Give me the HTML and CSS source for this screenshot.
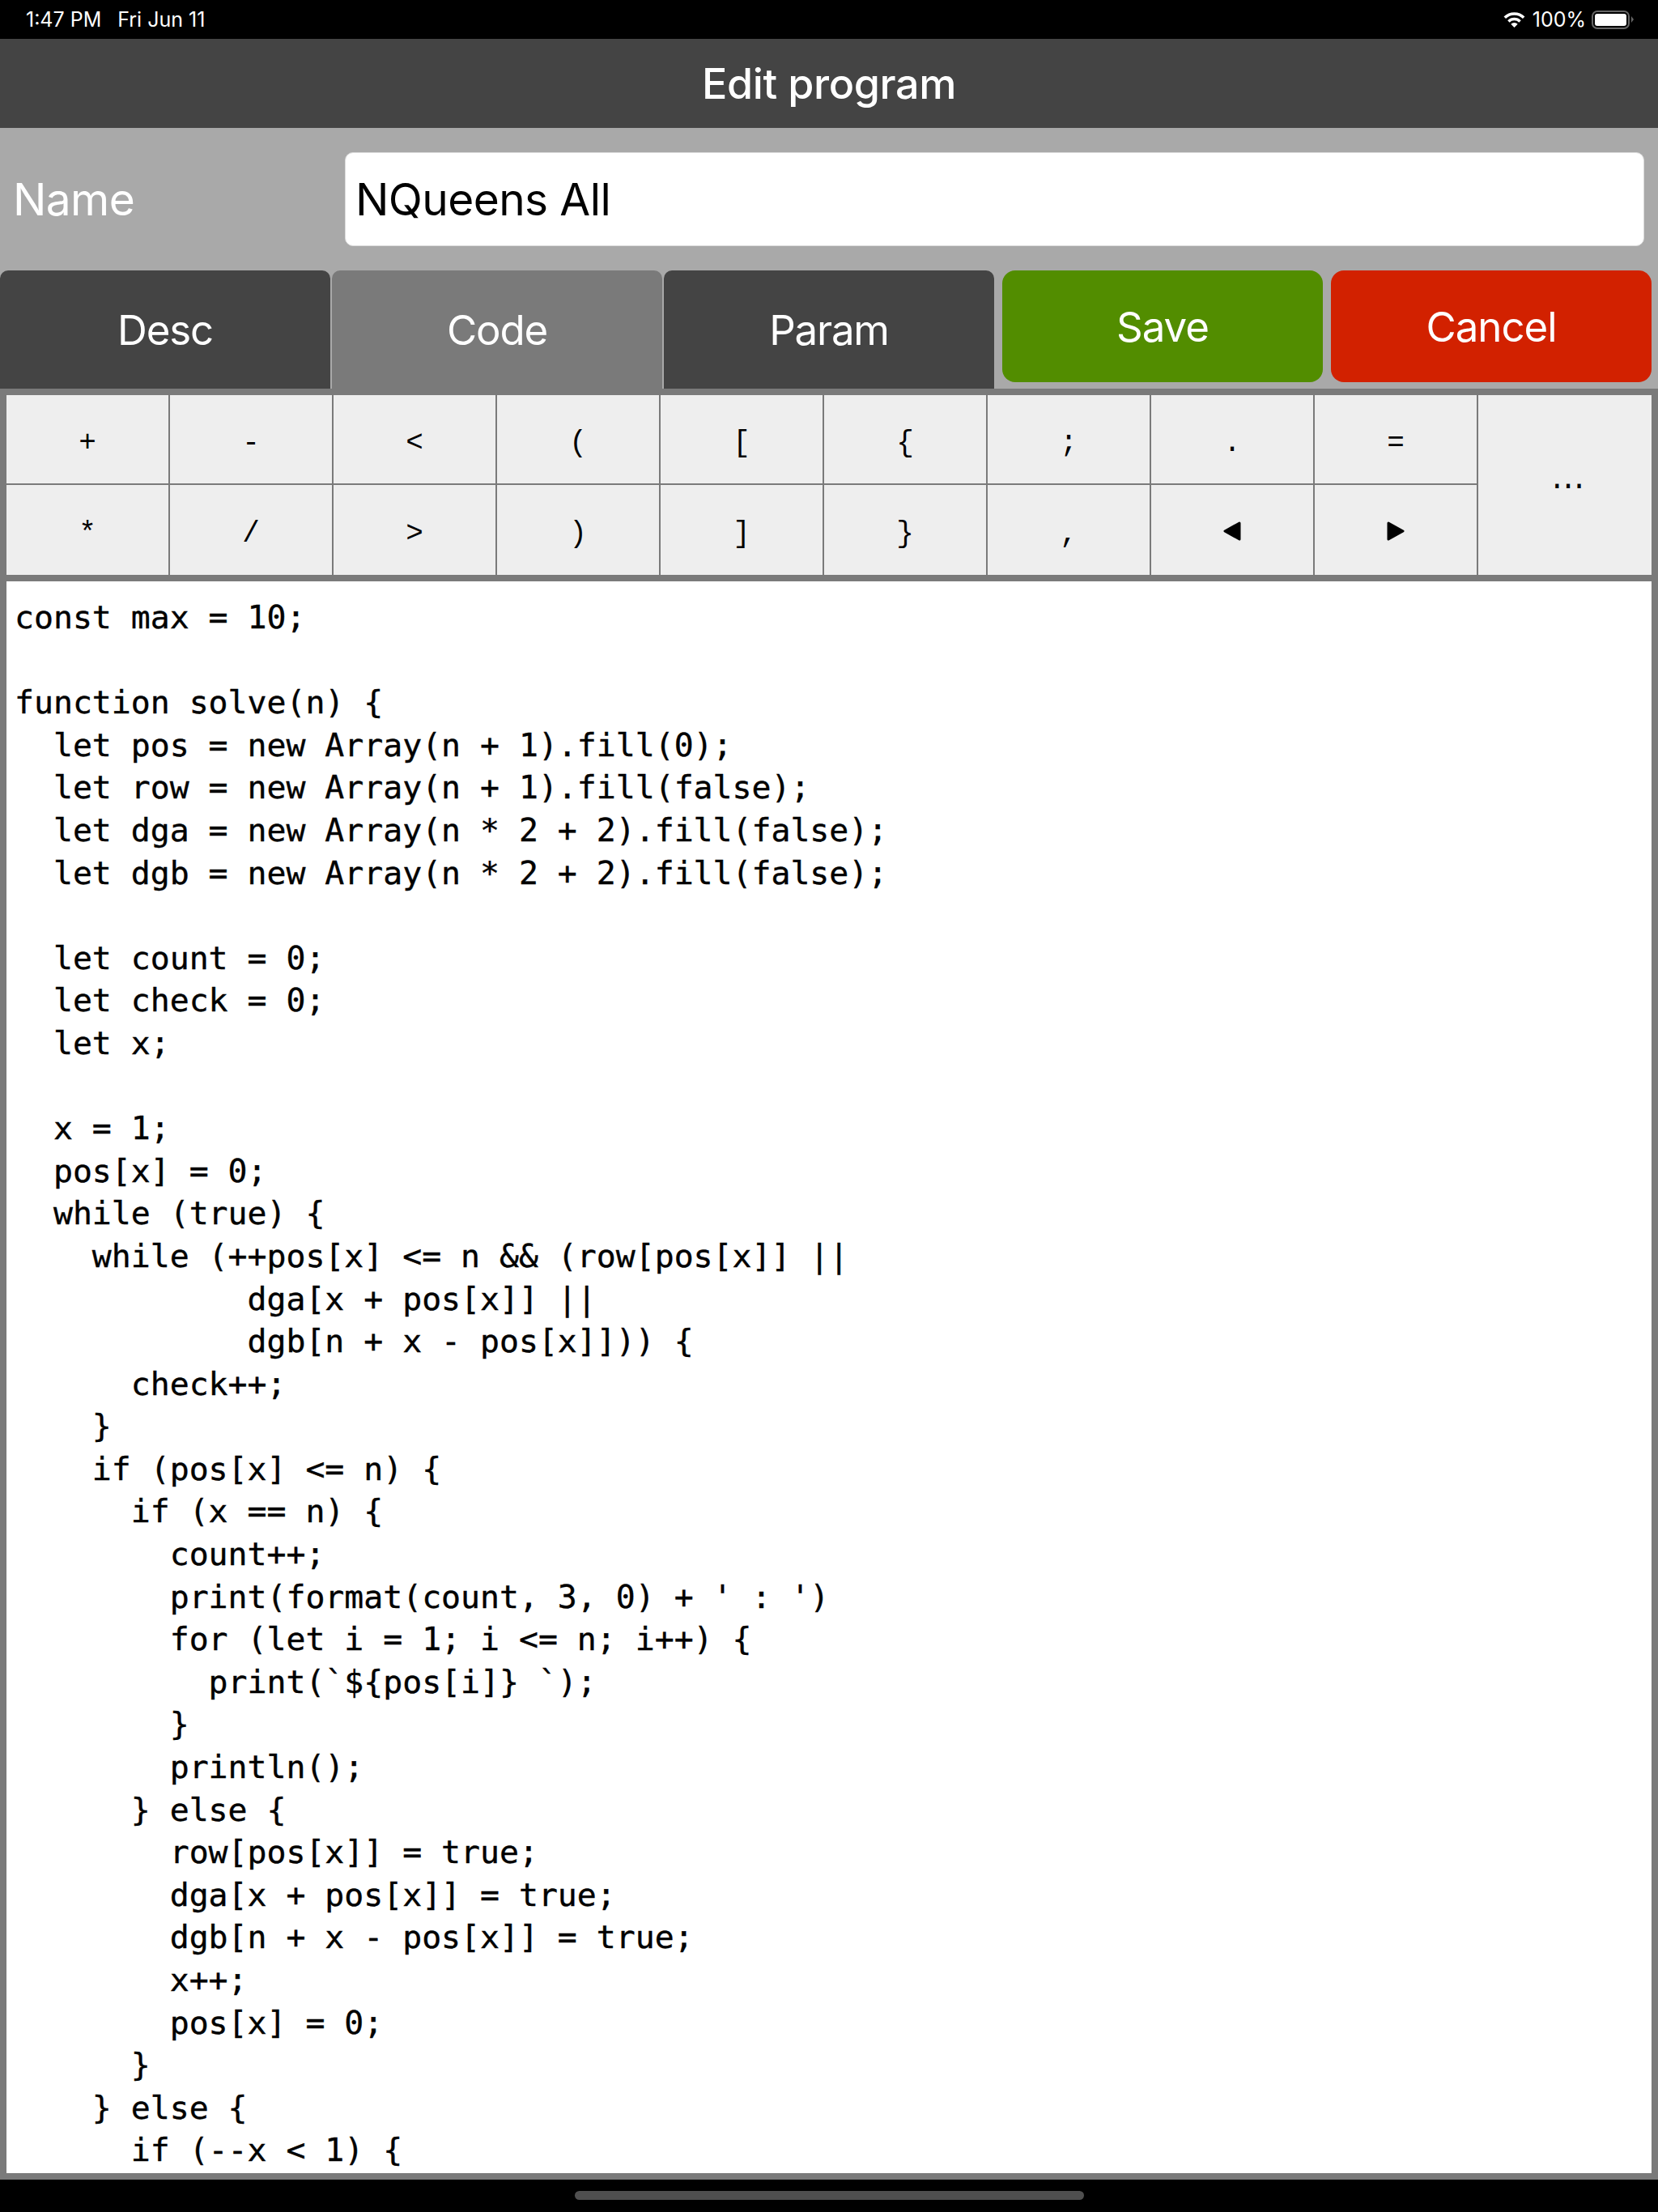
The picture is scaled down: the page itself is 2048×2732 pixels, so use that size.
FILE: index.html
```html
<!DOCTYPE html>
<html lang="en">
<head>
<meta charset="utf-8">
<title>Edit program</title>
<link rel="stylesheet" href="styles.css">
</head>
<body>
<div class="status">
  <div class="status-left"><span>1:47 PM</span><span>Fri Jun 11</span></div>
  <div class="status-right">
    <svg class="wifi" viewBox="0 0 27 19"><path class="wifi-arc" d="M1.800 6.800A16.500 16.500 0 0 1 25.200 6.800"/><path class="wifi-arc" d="M6.430 11.430A10 10 0 0 1 20.570 11.430"/><path d="M13.500 19L9.300 14.800A6 6 0 0 1 17.700 14.800Z"/></svg>
    <span class="pct">100%</span>
    <div class="battery"><div class="battery-fill"></div></div><div class="battery-cap"></div>
  </div>
</div>
<header class="title">Edit program</header>
<section class="form">
  <div class="name-row">
    <label class="name-label">Name</label>
    <div class="name-input">NQueens All</div>
  </div>
  <div class="actions">
    <div class="tab">Desc</div>
    <div class="tab active">Code</div>
    <div class="tab">Param</div>
    <div class="btn save">Save</div>
    <div class="btn cancel">Cancel</div>
  </div>
</section>
<section class="workspace">
  <div class="keys">
    <div class="key">+</div><div class="key">-</div><div class="key">&lt;</div><div class="key">(</div><div class="key">[</div><div class="key">{</div><div class="key">;</div><div class="key">.</div><div class="key">=</div>
    <div class="key more">...</div>
    <div class="key">*</div><div class="key">/</div><div class="key">&gt;</div><div class="key">)</div><div class="key">]</div><div class="key">}</div><div class="key">,</div>
    <div class="key arrow-key"><svg class="arrow" viewBox="0 0 22 24"><path d="M20 2 L2 12 L20 22 Z"/></svg></div>
    <div class="key arrow-key"><svg class="arrow" viewBox="0 0 22 24"><path d="M2 2 L20 12 L2 22 Z"/></svg></div>
  </div>
  <pre class="code">const max = 10;

function solve(n) {
  let pos = new Array(n + 1).fill(0);
  let row = new Array(n + 1).fill(false);
  let dga = new Array(n * 2 + 2).fill(false);
  let dgb = new Array(n * 2 + 2).fill(false);

  let count = 0;
  let check = 0;
  let x;

  x = 1;
  pos[x] = 0;
  while (true) {
    while (++pos[x] &lt;= n &amp;&amp; (row[pos[x]] ||
            dga[x + pos[x]] ||
            dgb[n + x - pos[x]])) {
      check++;
    }
    if (pos[x] &lt;= n) {
      if (x == n) {
        count++;
        print(format(count, 3, 0) + ' : ')
        for (let i = 1; i &lt;= n; i++) {
          print(`${pos[i]} `);
        }
        println();
      } else {
        row[pos[x]] = true;
        dga[x + pos[x]] = true;
        dgb[n + x - pos[x]] = true;
        x++;
        pos[x] = 0;
      }
    } else {
      if (--x &lt; 1) {</pre>
</section>
<div class="home"><div class="home-bar"></div></div>
</body>
</html>
```
FILE: styles.css
```css
* { box-sizing: border-box; }
html, body { margin: 0; padding: 0; }
body {
  width: 2048px;
  height: 2732px;
  background: #000;
  font-family: Inter, Roboto, sans-serif;
  color: #fff;
  display: flex;
  flex-direction: column;
  overflow: hidden;
}
.status {
  height: 48px;
  flex: none;
  background: #000;
  display: flex;
  justify-content: space-between;
  align-items: center;
  padding: 0 30px 0 32px;
  font-size: 25px;
}
.status-left { display: flex; gap: 20px; }
.status-right { display: flex; align-items: center; }
.wifi { width: 27px; height: 19px; fill: #fff; margin-right: 9px; }
.wifi-arc { fill: none; stroke: #fff; stroke-width: 3.500px; }
.pct { margin-right: 7px; }
.battery {
  width: 47px;
  height: 23px;
  border: 2px solid #666;
  border-radius: 7px;
  padding: 2px;
}
.battery-fill { width: 100%; height: 100%; background: #fff; border-radius: 3px; }
.battery-cap {
  width: 0;
  height: 0;
  margin-left: 2px;
  border-left: 3px solid #666;
  border-top: 4px solid transparent;
  border-bottom: 4px solid transparent;
}
.title {
  height: 110px;
  flex: none;
  background: #444;
  display: flex;
  align-items: center;
  justify-content: center;
  font-size: 52px;
  font-weight: 500;
  letter-spacing: -0.400px;
}
.form {
  height: 322px;
  flex: none;
  background: #a9a9a9;
  display: flex;
  flex-direction: column;
  padding-top: 30px;
}
.name-row { display: flex; height: 116px; padding-right: 17px; align-items: center; }
.name-label { width: 426px; padding-left: 16px; font-size: 55px; letter-spacing: -0.600px; }
.name-input {
  flex: 1;
  height: 116px;
  background: #fff;
  border: 1px solid #ddd;
  border-radius: 10px;
  color: #000;
  font-size: 55px;
  letter-spacing: -0.600px;
  padding-left: 12px;
  display: flex;
  align-items: center;
}
.actions { display: flex; margin-top: 30px; padding-right: 8px; height: 146px; align-items: flex-start; }
.tab {
  width: 408px;
  height: 146px;
  margin-right: 2px;
  background: #444;
  border-radius: 10px 10px 0 0;
  font-size: 51px;
  letter-spacing: -1.200px;
  display: flex;
  align-items: center;
  justify-content: center;
}
.tab.active { background: #7a7a7a; }
.btn {
  height: 138px;
  border-radius: 16px;
  font-size: 51px;
  letter-spacing: -1px;
  display: flex;
  align-items: center;
  justify-content: center;
}
.save { width: 396px; margin-left: 8px; background: #528d00; }
.cancel { width: 396px; margin-left: 10px; background: #d22100; }
.workspace {
  background: #7a7a7a;
  height: 2212px;
  flex: none;
  padding: 8px;
  display: flex;
  flex-direction: column;
  gap: 8px;
}
.keys {
  display: grid;
  grid-template-columns: repeat(9, 200px) 1fr;
  grid-template-rows: 109px 111px;
  gap: 2px;
  height: 222px;
  flex: none;
}
.key {
  background: #eee;
  color: #000;
  display: flex;
  align-items: center;
  justify-content: center;
  padding-top: 10px;
  font-family: "Liberation Mono", monospace;
  font-size: 36px;
}
.more { grid-column: 10; grid-row: 1 / span 2; padding: 0 0 12px; letter-spacing: -8px; }
.arrow-key { padding-top: 2px; }
.arrow { width: 22px; height: 24px; fill: #000; stroke: #000; stroke-width: 3px; stroke-linejoin: round; }
.code {
  flex: 1;
  margin: 0;
  background: #fff;
  color: #000;
  padding: 18px 10px;
  overflow: hidden;
  font-family: "DejaVu Sans Mono", monospace;
  font-size: 39.800px;
  line-height: 52.600px;
  -webkit-text-stroke: 0.400px #000;
}
.home { flex: 1; display: flex; justify-content: center; padding-top: 14px; }
.home-bar { width: 629px; height: 11px; border-radius: 6px; background: #4f4f4f; }
```
